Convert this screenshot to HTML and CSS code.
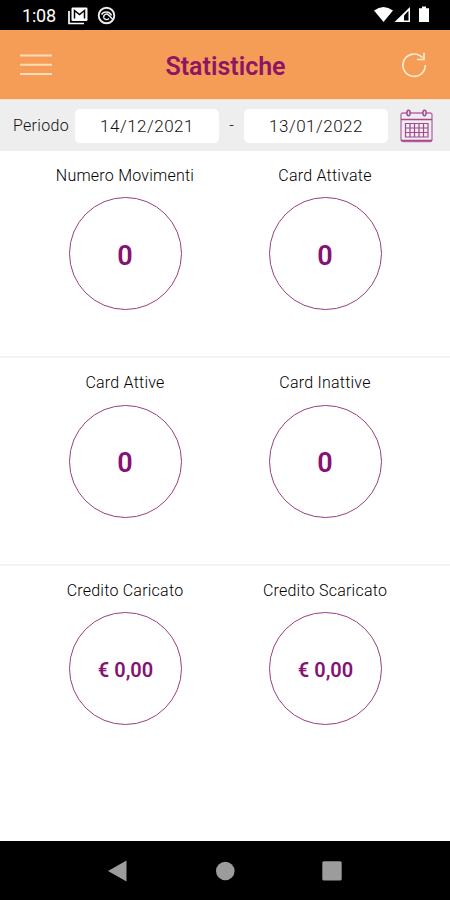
FILE: index.html
```html
<!DOCTYPE html>
<html lang="it">
<head>
<meta charset="utf-8">
<title>Statistiche</title>
<link rel="stylesheet" href="styles.css">
</head>
<body>
<div class="screen">
  <div class="status">
    <span class="time">1:08</span>
    <svg class="mail" width="20" height="18" viewBox="0 0 20 18"><path d="M1 4v12.5h15" fill="none" stroke="#fff" stroke-width="1.7"/><rect x="3.5" y="0.5" width="16" height="13.5" rx="1.2" fill="#fff"/><path d="M6.5 11.5V3.500l5 4 5-4v8" fill="none" stroke="#000" stroke-width="1.500"/></svg>
    <svg class="app" width="19" height="19" viewBox="0 0 19 19" fill="none" stroke="#eee"><circle cx="9.5" cy="9.5" r="7.8" stroke-width="1.900"/><path d="M4.500 8.500c2-3.500 8-3.500 10 1M6.500 11.500c0-3 3-4.500 5-2.500l4 4" stroke-width="1.600"/><path d="M6.500 11.500c1 2.500 4 2.500 5.500 1" stroke-width="1.300"/></svg>
    <svg class="signals" width="56" height="18" viewBox="0 0 56 18" fill="#fff"><path d="M0 4.500Q9.500-2.500 19 4.500L9.500 16z"/><path d="M36 1v15H20.500z"/><path d="M34.500 4.800v9.700h-4.500V9.400z" fill="#000"/><path d="M45 2.200h3V.5h4v1.700h3V16H45z"/></svg>
  </div>
  <header class="header">
    <svg class="menu" width="32" height="23" viewBox="0 0 32 23" stroke="#ffdcb8" stroke-width="2"><path d="M0 1.500h32M0 10.700h32M0 20h32"/></svg>
    <h1>Statistiche</h1>
    <svg class="reload" width="26" height="26" viewBox="0 0 26 26" fill="none" stroke="#ffead0" stroke-width="1.700"><path d="M24.300 13A11.200 11.200 0 1 1 21.500 5.800"/><path d="M23 .8v6.700h-7"/></svg>
  </header>
  <div class="filter">
    <span class="label">Periodo</span>
    <span class="date">14/12/2021</span>
    <span class="dash">-</span>
    <span class="date">13/01/2022</span>
    <svg class="calendar" width="33" height="34" viewBox="0 0 33 34" fill="none" stroke="#a4488f"><rect x="1" y="4" width="31" height="28.500" rx="2" stroke-width="1.300" stroke="#b66aab"/><path d="M1 10.500h31M1 31.500h31" stroke-width="1.300"/><path d="M5.500 14.500h22.500v13.500H5.500zM10 14.500V28M14.500 14.500V28M19 14.500V28M23.500 14.500V28M5.500 19H28M5.500 23.500H28" stroke-width="1.200"/><g fill="#eee" stroke-width="1.500"><ellipse cx="8.500" cy="4" rx="1.600" ry="2.700"/><ellipse cx="24.500" cy="4" rx="1.600" ry="2.700"/></g></svg>
  </div>
  <main class="stats">
    <section class="row">
      <div class="stat"><h2>Numero Movimenti</h2><div class="ring">0</div></div>
      <div class="stat"><h2>Card Attivate</h2><div class="ring">0</div></div>
    </section>
    <section class="row">
      <div class="stat"><h2>Card Attive</h2><div class="ring">0</div></div>
      <div class="stat"><h2>Card Inattive</h2><div class="ring">0</div></div>
    </section>
    <section class="row">
      <div class="stat"><h2>Credito Caricato</h2><div class="ring money">€ 0,00</div></div>
      <div class="stat"><h2>Credito Scaricato</h2><div class="ring money">€ 0,00</div></div>
    </section>
  </main>
  <nav class="nav">
    <svg width="234" height="22" viewBox="0 0 234 22" fill="#9c9c9c"><path d="M0 11 18.500.5v21z"/><circle cx="117.300" cy="11" r="9.300"/><rect x="214.300" y="1.200" width="19.400" height="19.400" rx="1.500"/></svg>
  </nav>
</div>
</body>
</html>
```
FILE: styles.css
```css
* { box-sizing: border-box; }
body { margin: 0; background: #fff; font-family: Roboto, "Liberation Sans", sans-serif; }
.screen { width: 450px; height: 900px; display: flex; flex-direction: column; overflow: hidden; }
.status { height: 30px; background: #000; color: #fff; display: flex; align-items: center; padding: 0 20px 0 22px; flex: none; }
.time { font-size: 18px; line-height: 30px; width: 46px; padding-top: 2px; letter-spacing: -0.2px; }
.mail { margin-top: 1px; }
.app { margin-left: 9px; }
.signals { margin-left: auto; }
.header { height: 69px; flex: none; background: #f59d56; display: flex; align-items: center; justify-content: space-between; padding: 0 23px 0 20px; }
.menu { margin-top: 2px; }
h1 { margin: 4px 2px 0 0; font-size: 25px; line-height: 30px; font-weight: 600; color: #8e1563; }
.filter { height: 51.5px; flex: none; background: #eee; border-top: 1px solid #f5dfcc; display: flex; align-items: center; padding: 1px 17px 0 13px; font-weight: 300; color: #111; }
.label { font-size: 16px; width: 62px; letter-spacing: 0.3px; }
.date { width: 144px; height: 34px; border-radius: 5px; background: #fff; font-size: 17px; line-height: 34px; text-align: center; letter-spacing: 0.5px; }
.dash { width: 25px; text-align: center; font-size: 16px; }
.calendar { margin-left: auto; }
.stats { flex: 1; }
.row { height: 207.6px; padding: 0 25px; display: flex; border-bottom: 2px solid #f2f2f2; }
.row:last-child { border-bottom: 0; }
.stat { width: 200px; display: flex; flex-direction: column; align-items: center; }
h2 { margin: 15px 0 11.5px; font-size: 16px; line-height: 20px; font-weight: 300; letter-spacing: 0.23px; color: #000; white-space: nowrap; }
.ring { width: 113px; height: 113px; border: 1px solid #97407f; border-radius: 50%; display: flex; align-items: center; justify-content: center; padding-top: 4px; color: #861175; font-size: 27px; font-weight: 600; }
.money { font-size: 20px; padding: 2px 0 0 1px; }
.nav { height: 59px; flex: none; background: #000; padding-left: 108px; display: flex; align-items: center; }
```
